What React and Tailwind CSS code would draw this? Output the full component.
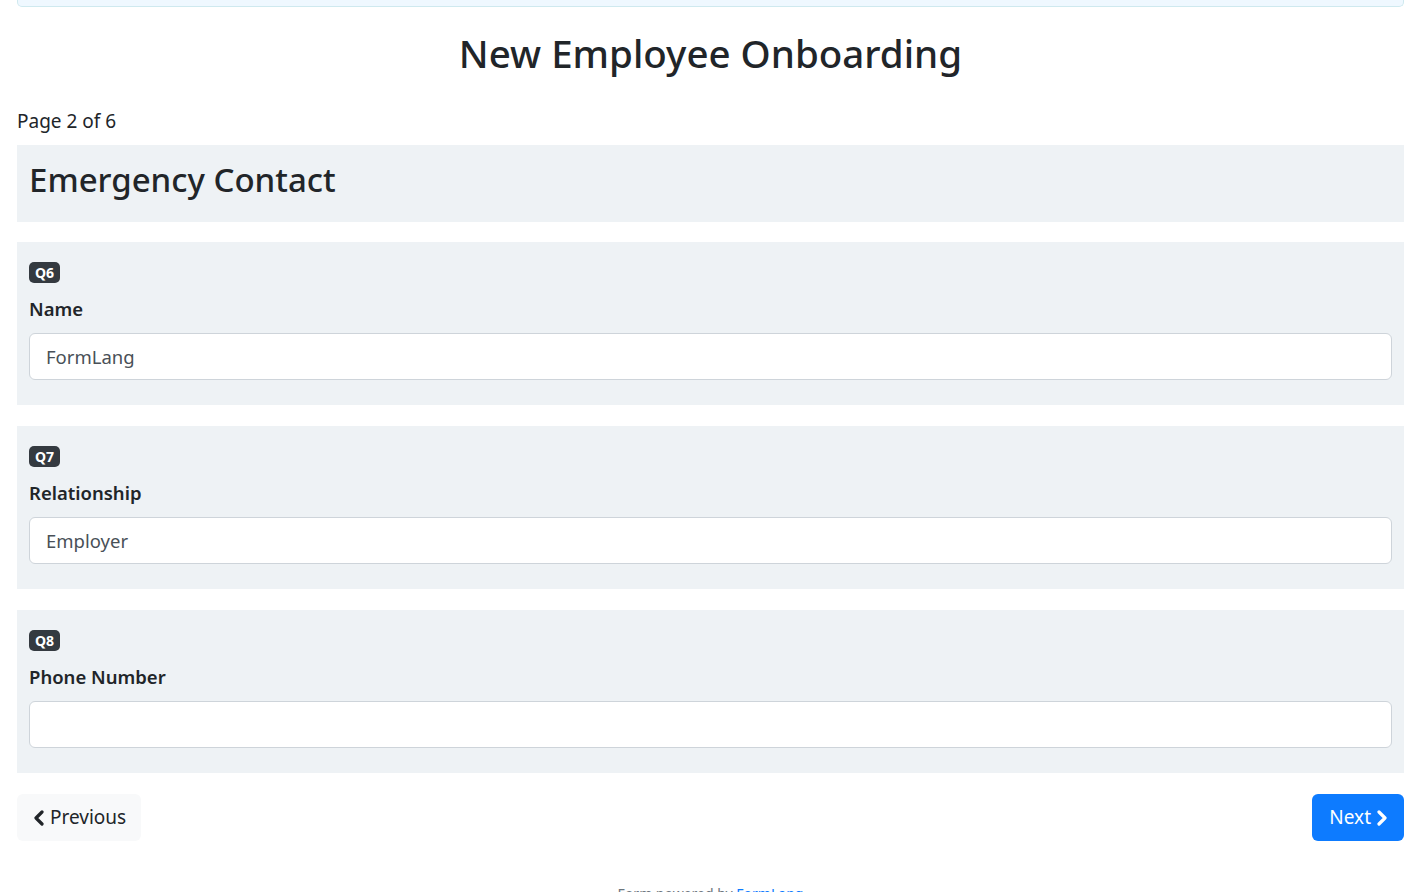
const questions = [
  { id: "Q6", label: "Name", value: "FormLang" },
  { id: "Q7", label: "Relationship", value: "Employer" },
  { id: "Q8", label: "Phone Number", value: "" },
];

function Chevron({ dir = "left" }) {
  return (
    <svg width="12" height="16" viewBox="0 0 12 16" fill="none" stroke="currentColor">
      <path
        d={dir === "left" ? "M9 2L3 8L9 14" : "M3 2L9 8L3 14"}
        strokeWidth={3.2}
        strokeLinecap="round"
        strokeLinejoin="round"
      />
    </svg>
  );
}

function QuestionCard({ id, label, value }) {
  return (
    <div className="bg-[#eef2f5] px-3 pt-5 pb-[25px]">
      <span className="block w-fit rounded-[5px] bg-[#343a40] px-[6px] text-[14px] font-bold leading-[21px] text-white">
        {id}
      </span>
      <label className="mt-[12px] block text-[18.5px] font-semibold leading-[27px] text-[#212529]">
        {label}
      </label>
      <input
        type="text"
        defaultValue={value}
        className="mt-[11px] block h-[47px] w-full rounded-[6px] border border-[#ced4da] bg-white px-4 text-[18.5px] text-[#495057] outline-none"
      />
    </div>
  );
}

export default function App() {
  return (
    <div
      className="min-h-screen bg-white pl-[17px] pr-[6px] text-[#212529]"
      style={{ fontFamily: '"Noto Sans", "Open Sans", sans-serif' }}
    >
      {/* alert strip, mostly scrolled away */}
      <div className="h-[7px] rounded-b-[5px] border-x border-b border-[#cfe9ef] bg-[#eff8ff]" />

      <h1 className="mt-[22px] text-center text-[38.5px] font-medium leading-[48px]">
        New Employee Onboarding
      </h1>

      <p className="mt-[31px] text-[19px] leading-[27px]">Page 2 of 6</p>

      <div className="mt-[10px] bg-[#eef2f5] px-3 pt-[13px] pb-[20px]">
        <h2 className="text-[33px] font-medium leading-[44px]">Emergency Contact</h2>
      </div>

      <div className="mt-[20px] flex flex-col gap-[21px]">
        {questions.map((q) => (
          <QuestionCard key={q.id} {...q} />
        ))}
      </div>

      <div className="mt-[21px] flex items-center justify-between">
        <button className="flex h-[47px] items-center gap-[5px] rounded-[6px] bg-[#f8f9fa] pl-[16px] pr-[15px] text-[19px] text-[#212529]">
          <Chevron dir="left" />
          Previous
        </button>
        <button className="flex h-[47px] items-center gap-[5px] rounded-[6px] bg-[#0d7bff] pl-[17px] pr-[16px] text-[19px] text-white">
          Next
          <Chevron dir="right" />
        </button>
      </div>

      <footer className="mt-[42px] pb-6 text-center text-[14px] text-[#6c757d]">
        Form powered by <a className="text-[#0d7bff]">FormLang</a>
      </footer>
    </div>
  );
}
